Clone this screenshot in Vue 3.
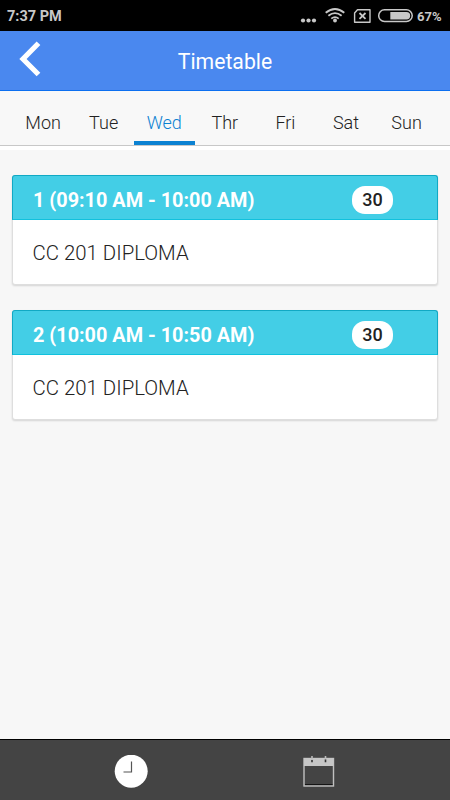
<script setup>
import { ref } from 'vue';

const days = ['Mon', 'Tue', 'Wed', 'Thr', 'Fri', 'Sat', 'Sun'];
const selectedDay = ref('Wed');

const lectures = ref([
  { id: 1, time: '09:10 AM - 10:00 AM', subject: 'CC 201 DIPLOMA', count: 30 },
  { id: 2, time: '10:00 AM - 10:50 AM', subject: 'CC 201 DIPLOMA', count: 30 },
]);
</script>

<template>
  <div class="screen">
    <div class="status-bar">
      <span class="clock">7:37 PM</span>
      <svg class="status-icons" width="113" height="31" viewBox="0 0 113 31">
        <g fill="#c8c8c8">
          <circle cx="3" cy="20.5" r="2.1" />
          <circle cx="8.5" cy="20.5" r="2.1" />
          <circle cx="14" cy="20.5" r="2.1" />
          <circle cx="35" cy="20.5" r="1.9" />
        </g>
        <g fill="none" stroke="#c8c8c8" stroke-width="1.8">
          <path d="M25.7 12.8q9.3-7.6 18.6 0" />
          <path d="M28.4 15.8q6.6-5.4 13.2 0" />
          <path d="M31.3 18.6q3.7-3 7.4 0" />
          <path d="M57.5 9.7H70V22.2H54.6V13Z" stroke-width="1.4" stroke-linejoin="round" />
          <path d="M59.5 13l6 5.8M65.5 13l-6 5.8" stroke-width="1.8" />
          <rect x="78.7" y="9.8" width="33.5" height="11.7" rx="5.8" stroke-width="1.5" />
        </g>
        <path d="M90.3 12H106.5a3.7 3.7 0 0 1 0 7.4H90.3Z" fill="#c8c8c8" />
      </svg>
      <span class="percent">67%</span>
    </div>

    <div class="header">
      <svg class="back" width="22" height="36" viewBox="0 0 22 36">
        <path d="M19.5 2.2L4 18L19.500 33.5" fill="none" stroke="#fff" stroke-width="5.2" />
      </svg>
      <h1>Timetable</h1>
    </div>

    <div class="tabs">
      <div
        v-for="day in days"
        :key="day"
        class="tab"
        :class="{ active: day === selectedDay }"
        @click="selectedDay = day"
      >{{ day }}</div>
    </div>

    <div class="content">
      <div v-for="lecture in lectures" :key="lecture.id" class="card">
        <div class="card-header">
          <span class="card-title">{{ lecture.id }} ({{ lecture.time }})</span>
          <span class="badge">{{ lecture.count }}</span>
        </div>
        <div class="card-body">{{ lecture.subject }}</div>
      </div>
    </div>

    <div class="footer">
      <svg width="34" height="34" viewBox="0 0 34 34">
        <circle cx="17.2" cy="16.2" r="16.5" fill="#fff" />
        <path d="M17.5 6.5V17H9.5" fill="none" stroke="#555" stroke-width="1.2" />
      </svg>
      <svg width="32" height="32" viewBox="0 0 32 32">
        <rect x="1" y="3.5" width="29.5" height="27.5" fill="none" stroke="#c0c0c0" stroke-width="1.4" />
        <path d="M1 3h29.5v8H1z" fill="#c6c6c6" />
        <path d="M2 29.5h27.5" stroke="#151515" stroke-width="1" />
        <path d="M9 1v4M22.5 1v4" stroke="#bbb" stroke-width="1.6" />
        <path d="M9 5v2.2M22.5 4.5v2.7" stroke="#333" stroke-width="1.6" />
      </svg>
    </div>
  </div>
</template>

<style>
body {
  margin: 0;
}
</style>

<style scoped>
* {
  box-sizing: border-box;
}
.screen {
  display: flex;
  flex-direction: column;
  width: 450px;
  height: 800px;
  background: #f7f7f7;
  color: #222;
  font-family: Roboto, sans-serif;
  overflow: hidden;
}
.status-bar {
  display: flex;
  align-items: center;
  height: 31px;
  padding: 0 8px 0 7px;
  background: #000;
  color: #c8c8c8;
  font-weight: 700;
}
.clock {
  flex: 1;
  font-size: 14.5px;
  padding-top: 2px;
}
.status-icons {
  margin-right: 4px;
}
.percent {
  width: 25px;
  font-size: 13px;
  padding-top: 2px;
  white-space: nowrap;
}
.header {
  display: grid;
  grid-template-columns: 60px 1fr 60px;
  align-items: center;
  height: 60px;
  background: #4a88ef;
  border-bottom: 1px solid #0c6ff0;
}
.back {
  margin: 0 0 4px 19px;
}
h1 {
  margin: 0;
  padding-top: 2px;
  color: #fff;
  text-align: center;
  font-size: 21.2px;
  font-weight: 400;
}
.tabs {
  display: flex;
  flex-shrink: 0;
  height: 55px;
  padding: 0 13px;
  background: #f8f8f8;
  border-bottom: 1px solid #c8c8c8;
}
.tab {
  flex: 1;
  height: 54px;
  padding: 9px 0.4px 0 0;
  text-align: center;
  font-size: 18px;
  line-height: 46px;
  font-weight: 300;
}
.tab.active {
  color: #0c82d2;
  border-bottom: 4px solid #0c82d2;
}
.content {
  flex: 1;
  padding: 25px 12px 0;
  border-top: 4px solid #fff;
}
.card {
  height: 110px;
  margin: 0 0 25px;
  background: #fff;
  border: 1px solid #dedede;
  border-radius: 3px;
  box-shadow: 0 1px 2px rgba(0, 0, 0, 0.14);
}
.card-header {
  display: flex;
  align-items: center;
  justify-content: space-between;
  height: 45px;
  margin: -1px -1px 0;
  padding: 5px 44px 0 20px;
  background: #43cee6;
  border: 1px solid #11a9c4;
  border-bottom-color: #11c1dd;
  border-radius: 3px 3px 0 0;
}
.card-title {
  color: #fff;
  font-size: 19.85px;
  font-weight: 700;
}
.badge {
  width: 41px;
  height: 28px;
  border-radius: 13px;
  background: #fff;
  text-align: center;
  font-size: 18px;
  line-height: 28px;
  font-weight: 500;
}
.card-body {
  padding: 0 19.5px;
  font-size: 20.4px;
  line-height: 66px;
  font-weight: 300;
}
.footer {
  display: flex;
  height: 61px;
  padding-top: 15px;
  background: #444;
  border-top: 1px solid #000;
}
.footer svg {
  margin-left: 114px;
}
.footer svg + svg {
  margin-left: 155px;
}
</style>
